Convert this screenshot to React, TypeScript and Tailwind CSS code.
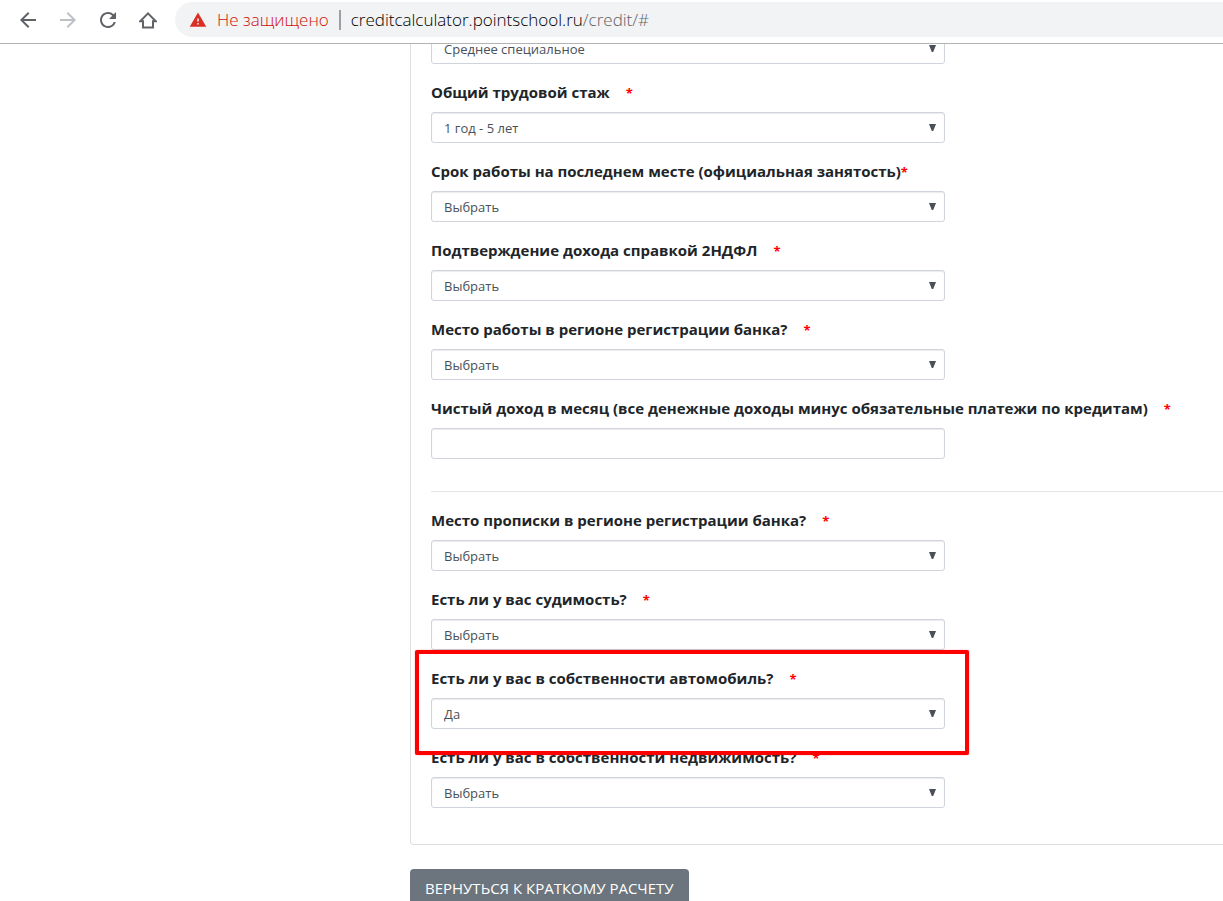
import { useId, useState } from "react";
import type { ReactNode } from "react";
import { MdArrowBack, MdArrowForward, MdRefresh, MdWarning } from "react-icons/md";

type FieldProps = {
  label: string;
  labelHidden?: boolean;
  tight?: boolean;
  options?: string[];
  highlighted?: boolean;
};

const CONTROL =
  "block h-[31px] w-full rounded-[3px] border border-[#ced4da] bg-white px-3 text-[13px] leading-5 text-[#495057] shadow-[inset_0_1px_1px_rgba(0,0,0,0.08)] outline-none";

function Field({ label, labelHidden = false, tight = false, options, highlighted = false }: FieldProps) {
  const id = useId();
  const [value, setValue] = useState(options ? options[0] : "");
  return (
    <div className="relative mb-4 w-full max-w-[514px]">
      {!labelHidden && (
        <label htmlFor={id} className="mb-2 block h-6 text-[15px] leading-6 font-bold whitespace-nowrap text-[#212529]">
          {label}
          <span className={tight ? "text-[13px] text-[#ff0000]" : "ml-4 text-[13px] text-[#ff0000]"}>*</span>
        </label>
      )}
      {options ? (
        <div className="relative">
          <select
            id={id}
            aria-label={labelHidden ? label : undefined}
            value={value}
            onChange={(e) => setValue(e.target.value)}
            className={`${CONTROL} appearance-none`}
          >
            {options.map((o) => (
              <option key={o}>{o}</option>
            ))}
          </select>
          <svg
            viewBox="0 0 8 7"
            className="pointer-events-none absolute top-3 right-2 h-[7px] w-2 fill-[#495057]"
            aria-hidden="true"
          >
            <path d="M0 0H7L4.2 7H2.8Z" />
          </svg>
        </div>
      ) : (
        <input
          id={id}
          type="text"
          value={value}
          onChange={(e) => setValue(e.target.value)}
          className={CONTROL}
        />
      )}
      {highlighted && (
        <div className="pointer-events-none absolute -top-4 -right-6 -bottom-[26px] -left-4 z-10 rounded-[2px] border-4 border-[#ff0000] shadow-[0_0_1px_#ff0000]" />
      )}
    </div>
  );
}

function NavButton({ label, disabled, children }: { label: string; disabled?: boolean; children: ReactNode }) {
  return (
    <button
      type="button"
      aria-label={label}
      disabled={disabled}
      className="flex size-10 items-center justify-center text-[#5f6368] disabled:text-[#bdc1c6]"
    >
      {children}
    </button>
  );
}

function Toolbar() {
  return (
    <header className="flex h-11 shrink-0 items-start border-b border-[#b3b3b3] bg-white pl-2">
      <nav className="flex shrink-0">
        <NavButton label="Назад">
          <MdArrowBack size={24} />
        </NavButton>
        <NavButton label="Вперёд" disabled>
          <MdArrowForward size={24} />
        </NavButton>
        <NavButton label="Обновить">
          <MdRefresh size={24} />
        </NavButton>
        <NavButton label="Домой">
          <svg viewBox="0 0 18 18" className="size-[18px]" fill="none" stroke="currentColor" strokeWidth="2" aria-hidden="true">
            <path d="M1.2 10.3H4V16.5H14V10.3H16.8L9 2.4Z" />
          </svg>
        </NavButton>
      </nav>
      <div className="mt-[2px] ml-[7px] flex h-[35px] min-w-0 flex-1 items-center rounded-l-full bg-[#f1f3f4] pl-[14px] text-[17px] leading-6 font-light whitespace-nowrap">
        <MdWarning size={18} className="shrink-0 text-[#d93025]" />
        <span className="ml-[10px] text-[#d0120a]">Не защищено</span>
        <span className="mx-[10px] h-5 w-[2px] bg-[#9aa0a6]" />
        <span className="text-black">
          creditcalculator.pointschool.ru<span className="text-[#5f6368]">/credit/#</span>
        </span>
      </div>
    </header>
  );
}

const CHOICE = ["Выбрать", "Да", "Нет"];

export default function App() {
  return (
    <div className="flex h-screen flex-col overflow-hidden bg-white font-['Open_Sans','Noto_Sans',sans-serif]">
      <Toolbar />
      <main className="flex min-h-0 flex-1 flex-col justify-start overflow-hidden">
        <form className="-mt-8 ml-[410px]" onSubmit={(e) => e.preventDefault()}>
          <section className="rounded-l-[4px] border border-r-0 border-[#dfdfdf] p-5">
            <Field label="Образование" labelHidden options={["Среднее специальное", "Высшее"]} />
            <Field label="Общий трудовой стаж" options={["1 год - 5 лет", "Более 5 лет"]} />
            <Field
              label="Срок работы на последнем месте (официальная занятость)"
              tight
              options={["Выбрать", "1 год - 5 лет", "Более 5 лет"]}
            />
            <Field label="Подтверждение дохода справкой 2НДФЛ" options={CHOICE} />
            <Field label="Место работы в регионе регистрации банка?" options={CHOICE} />
            <Field label="Чистый доход в месяц (все денежные доходы минус обязательные платежи по кредитам)" />
            <hr className="mt-8 -mr-5 mb-4 border-[#e5e5e5]" />
            <Field label="Место прописки в регионе регистрации банка?" options={CHOICE} />
            <Field label="Есть ли у вас судимость?" options={CHOICE} />
            <Field label="Есть ли у вас в собственности автомобиль?" options={["Да", "Нет"]} highlighted />
            <Field label="Есть ли у вас в собственности недвижимость?" options={CHOICE} />
          </section>
          <button
            type="button"
            className="mt-6 h-[38px] rounded-[4px] bg-[#6c757d] px-[15px] text-[15px] leading-6 whitespace-nowrap text-white"
          >
            ВЕРНУТЬСЯ К КРАТКОМУ РАСЧЕТУ
          </button>
        </form>
      </main>
    </div>
  );
}
